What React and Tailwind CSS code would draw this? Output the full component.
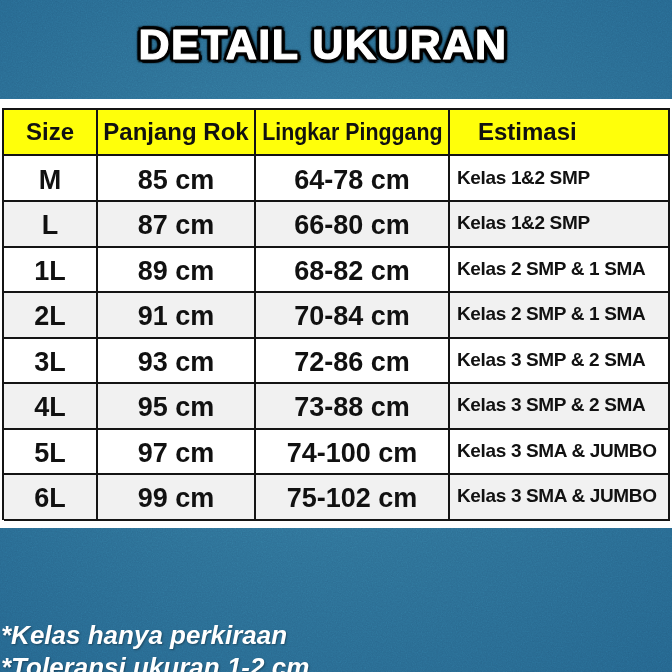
import React from "react";

const rows = [
  ["M", "85 cm", "64-78 cm", "Kelas 1&2 SMP"],
  ["L", "87 cm", "66-80 cm", "Kelas 1&2 SMP"],
  ["1L", "89 cm", "68-82 cm", "Kelas 2 SMP & 1 SMA"],
  ["2L", "91 cm", "70-84 cm", "Kelas 2 SMP & 1 SMA"],
  ["3L", "93 cm", "72-86 cm", "Kelas 3 SMP & 2 SMA"],
  ["4L", "95 cm", "73-88 cm", "Kelas 3 SMP & 2 SMA"],
  ["5L", "97 cm", "74-100 cm", "Kelas 3 SMA & JUMBO"],
  ["6L", "99 cm", "75-102 cm", "Kelas 3 SMA & JUMBO"],
];

const cell = "border-r-2 border-b-2 border-[#141414] flex items-center";

export default function App() {
  return (
    <div className="relative w-[672px] h-[672px] overflow-hidden bg-[#2a6a90] font-['Liberation_Sans',Arial,sans-serif]">
      <div className="absolute inset-0 bg-[radial-gradient(ellipse_90%_80%_at_48%_45%,#3a81a7_0%,#2d6f95_50%,#22618a_100%)]" />
      <svg className="absolute inset-0 opacity-[0.22] mix-blend-overlay" width="672" height="672">
        <filter id="n">
          <feTurbulence type="fractalNoise" baseFrequency="0.8" numOctaves="3" seed="4" />
          <feColorMatrix type="saturate" values="0" />
        </filter>
        <rect width="672" height="672" filter="url(#n)" />
      </svg>
      <div className="relative flex flex-col">
        <div className="h-[99px] pt-[23px] flex justify-center pr-[26px]">
          <div className="text-[43px] leading-[42px] font-bold text-white tracking-[1.5px] [-webkit-text-stroke:1.2px_white] [text-shadow:3px_0_0_#000,-3px_0_0_#000,0_3px_0_#000,0_-3px_0_#000,2px_2px_0_#000,-2px_2px_0_#000,2px_-2px_0_#000,-2px_-2px_0_#000,4px_1px_1px_#000,-4px_1px_1px_#000,1px_4px_1px_#000,1px_-4px_1px_#000,3px_3px_2px_#000,-3px_3px_2px_#000,3px_-3px_2px_#000,-3px_-3px_2px_#000,0_0_6px_rgba(0,0,0,0.6)]">
            DETAIL UKURAN
          </div>
        </div>
        <div className="h-[429px] bg-white pt-[9px] px-[2px]">
          <div className="w-[668px] border-l-2 border-t-2 border-[#141414] text-[#111]">
            <div className="grid grid-cols-[94px_158px_194px_220px] h-[45.5px] bg-[#ffff0a] text-[24px] font-bold">
              <div className={`${cell} justify-center`}>Size</div>
              <div className={`${cell} justify-center`}>Panjang Rok</div>
              <div className={`${cell} justify-center`}>
                <span className="inline-block whitespace-nowrap scale-x-[0.89]">Lingkar Pinggang</span>
              </div>
              <div className={`${cell} pl-[28px]`}>Estimasi</div>
            </div>
            {rows.map((r, i) => (
              <div
                key={r[0]}
                className={`grid grid-cols-[94px_158px_194px_220px] h-[45.5px] font-bold ${i % 2 === 1 ? "bg-[#f1f1f1]" : "bg-white"}`}
              >
                <div className={`${cell} justify-center pt-[4px] text-[27px]`}>{r[0]}</div>
                <div className={`${cell} justify-center pt-[4px] text-[27px]`}>{r[1]}</div>
                <div className={`${cell} justify-center pt-[4px] text-[27px]`}>{r[2]}</div>
                <div className={`${cell} pl-[7px] text-[19px] tracking-[-0.35px] whitespace-nowrap`}>{r[3]}</div>
              </div>
            ))}
          </div>
        </div>
        <div className="pt-[91px] pl-[1px] text-white italic font-bold text-[26px] leading-[32px] [text-shadow:1px_1px_2px_rgba(0,0,0,0.35)]">
          <div className="whitespace-nowrap">*Kelas hanya perkiraan</div>
          <div className="whitespace-nowrap">*Toleransi ukuran 1-2 cm</div>
        </div>
      </div>
    </div>
  );
}
